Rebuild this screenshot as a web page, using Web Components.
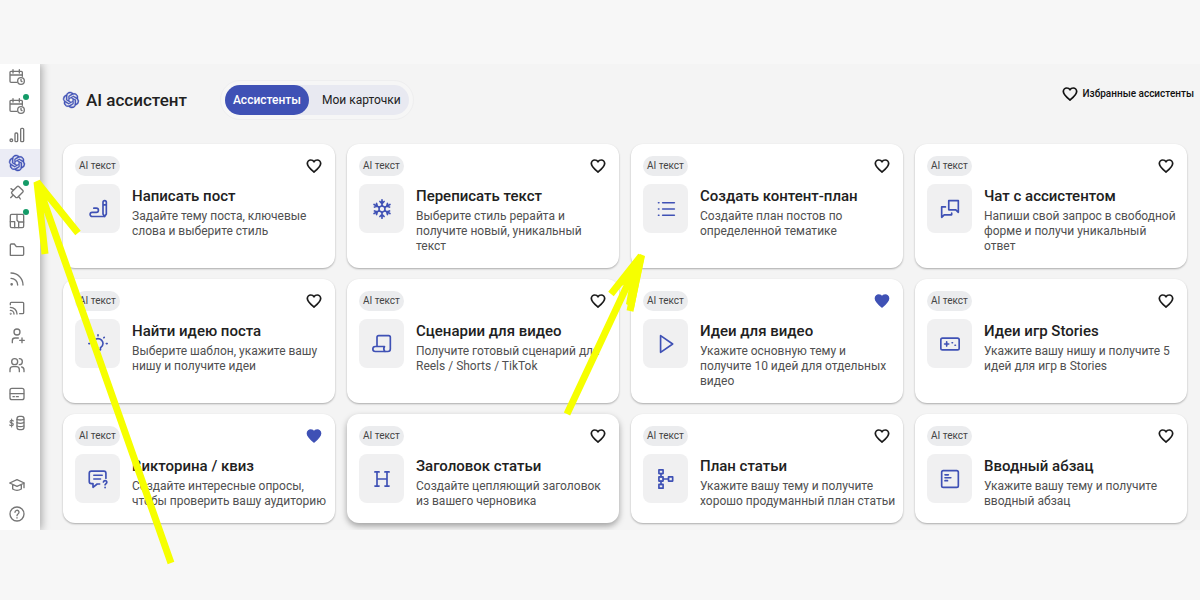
<!DOCTYPE html>
<html lang="ru">
<head>
<meta charset="utf-8">
<title>AI ассистент</title>
<style>
  body { margin: 0; background: #f7f7f7; font-family: Roboto, "Noto Sans", sans-serif; color: #212121; }
</style>
</head>
<body>
<assistant-app></assistant-app>
<script>
const AI = '<path fill="currentColor" stroke="currentColor" stroke-width=".7" d="M22.2819 9.8211a5.9847 5.9847 0 0 0-.5157-4.9108 6.0462 6.0462 0 0 0-6.5098-2.9A6.0651 6.0651 0 0 0 4.9807 4.1818a5.9847 5.9847 0 0 0-3.9977 2.9 6.0462 6.0462 0 0 0 .7427 7.0966 5.98 5.98 0 0 0 .511 4.9107 6.051 6.051 0 0 0 6.5146 2.9001A5.9847 5.9847 0 0 0 13.2599 24a6.0557 6.0557 0 0 0 5.7718-4.2058 5.9894 5.9894 0 0 0 3.9977-2.9001 6.0557 6.0557 0 0 0-.7475-7.0729zm-9.022 12.6081a4.4755 4.4755 0 0 1-2.8764-1.0408l.1419-.0804 4.7783-2.7582a.7948.7948 0 0 0 .3927-.6813v-6.7369l2.02 1.1686a.071.071 0 0 1 .038.052v5.5826a4.504 4.504 0 0 1-4.4945 4.4944zm-9.6607-4.1254a4.4708 4.4708 0 0 1-.5346-3.0137l.142.0852 4.783 2.7582a.7712.7712 0 0 0 .7806 0l5.8428-3.3685v2.3324a.0804.0804 0 0 1-.0332.0615L9.74 19.9502a4.4992 4.4992 0 0 1-6.1408-1.6464zM2.3408 7.8956a4.485 4.485 0 0 1 2.3655-1.9728V11.6a.7664.7664 0 0 0 .3879.6765l5.8144 3.3543-2.0201 1.1685a.0757.0757 0 0 1-.071 0l-4.8303-2.7865A4.504 4.504 0 0 1 2.3408 7.872zm16.5963 3.8558L13.1038 8.364 15.1192 7.2a.0757.0757 0 0 1 .071 0l4.8303 2.7913a4.4944 4.4944 0 0 1-.6765 8.1042v-5.6772a.79.79 0 0 0-.407-.667zm2.0107-3.0231l-.142-.0852-4.7735-2.7818a.7759.7759 0 0 0-.7854 0L9.409 9.2297V6.8974a.0662.0662 0 0 1 .0284-.0615l4.8303-2.7866a4.4992 4.4992 0 0 1 6.6802 4.66zM8.3065 12.863l-2.02-1.1638a.0804.0804 0 0 1-.038-.0567V6.0742a4.4992 4.4992 0 0 1 7.3757-3.4537l-.142.0805L8.704 5.459a.7948.7948 0 0 0-.3927.6813zm1.0976-2.3654l2.602-1.4998 2.6069 1.4998v2.9994l-2.5974 1.4997-2.6067-1.4997Z"/>';
const HEART = 'M12 21C7.5 17.2 2 12.8 2 8.2A5.2 5.2 0 0 1 7.2 3C9.2 3 11 4 12 5.7C13 4 14.8 3 16.8 3A5.2 5.2 0 0 1 22 8.2C22 12.8 16.5 17.2 12 21Z';
const FLAKE_ARM = '<path d="M12 8 15.5 10M12 8V1M9.500 3 12 5.500 14.500 3"/>';

/* Every glyph is drawn on a 24-unit grid. */
const ICONS = {
  ai: AI,
  heart: `<path stroke-width="2.6" d="${HEART}"/>`,
  'heart-full': `<path fill="currentColor" d="${HEART}"/>`,
  calendar: '<path d="M12 20H3a1.5 1.5 0 0 1-1.5-1.5V5A1.5 1.5 0 0 1 3 3.5h15.5A1.5 1.5 0 0 1 20 5v6M1.5 9H20M6 1v5M15.5 1v5"/><circle cx="18" cy="18" r="5"/><path d="M18 15.5V18l1.5 1"/>',
  chart: '<circle cx="3.5" cy="20" r="2"/><rect x="9" y="9" width="4" height="13" rx="1.5"/><rect x="17.5" y="2" width="4.5" height="20" rx="1.5"/>',
  plug: '<path d="M4.5 11.5 12 4q1.5-1.5 3 0l5.5 5.5q1.5 1.5 0 3L13 20q-1.5 1-3 0l-5.5-5.5q-1.5-1.5 0-3ZM6 17l-3.5 3.5M6.5 9.5 3 7M14.5 18.5l2.5 4"/>',
  layout: '<rect x="2" y="2" width="20" height="20" rx="2"/><path d="M12 2v9l2.5 2.5V22M14.5 13.5H22M8.5 22V13L2 13"/>',
  folder: '<path d="M2 20V4.5Q2 3 3.5 3H8l3 4h9.5Q22 7 22 8.5v10Q22 20 20.5 20Z"/>',
  rss: '<circle cx="4" cy="20" r="1"/><path d="M3 11a10 10 0 0 1 10 10M3 3a18 18 0 0 1 18 18"/>',
  cast: '<path d="M2 7V5q0-1.5 1.5-1.5h17Q22 3.5 22 5v14q0 1.5-1.5 1.5H16M2 11a10 10 0 0 1 10 10M2 15.5a5.5 5.5 0 0 1 5.5 5.5"/><circle cx="2.5" cy="20.5" r=".5"/>',
  'user-add': '<circle cx="12" cy="6" r="4.5"/><path d="M5 22v-3q0-4 4-4h5M19.5 15v7M16 18.5h7"/>',
  users: '<circle cx="8.5" cy="7" r="4.5"/><path d="M1.5 22v-3q0-4.5 4.5-4.5h5q4.5 0 4.5 4.5v3M15.5 2.5a4.5 4.5 0 0 1 0 9M19 15q3.5 1 3.5 4.5V22"/>',
  card: '<rect x="1.5" y="3.5" width="21" height="17" rx="3"/><path d="M2 11.5h20M6 16h2M11 16h3"/>',
  coins: '<path stroke-width="1.6" d="M4 6v12M6.5 9Q5.5 8 4 8 1.5 8 1.5 10T4 12t2.5 2T4 16q-2 0-3-1"/><rect x="12" y="2" width="10.5" height="20" rx="3.5"/><path d="M12 6.5q5 2 10 0M12 11.5q5 2 10 0M12 16.5q5 2 10 0"/>',
  cap: '<path d="M1 9 12 4l11 5-11 5ZM5.5 11v7q6.5 4 13 0v-7M22.5 9.5V16"/>',
  help: '<circle cx="12" cy="12" r="10.5"/><path d="M9 9.5a3 3 0 1 1 4.5 2.5Q12 13 12 14.5M12 17.5v.5"/>',
  write: '<path d="M18 18V4a2 2 0 0 1 4 0v14l-2 3ZM18 7h4M20 21H5a2.5 2.5 0 0 1 0-5h5a2.5 2.5 0 0 0 0-5H7"/>',
  snow: [0, 60, 120, 180, 240, 300].map(a => `<g transform="rotate(${a} 12 12)">${FLAKE_ARM}</g>`).join(''),
  list: '<path d="M8 4.5h14M8 12h14M8 19.5h14M3 4.5h.5M3 12h.5M3 19.5h.5"/>',
  chat: '<path d="M10.5 2H22v14l-3-3h-8.5ZM6.5 9.5H2V22l3-3h9v-2"/>',
  idea: '<path d="M9 19v-2.5q-3-2-3-5a6 6 0 0 1 12 0q0 3-3 5V19ZM12 1v1M4.5 4l.5.5M19.5 4l-.5.5M1 11.5h1M22 11.5h1"/>',
  script: '<path d="M6 15V4q0-2 2-2h12q2 0 2 2v14q0 3-3 3H4a3 3 0 0 1 0-6H15q-2 3 .5 6"/>',
  play: '<path d="M5.5 2 20 12 5.5 22Z"/>',
  game: '<rect x="1" y="5" width="22" height="14" rx="2"/><path d="M8 9.5v5M5.5 12h5M14.5 10.5h.5M18 13.5h.5"/>',
  quiz: '<path d="M21.5 11V5q0-2.5-2.5-2.5H4Q1.5 2.5 1.5 5v10q0 2.5 2.5 2.5h2V22l5-4h3M7 7.5h10M7 12h8M18.5 15.5q.5-1.5 2-1.5 2.5 0 2 2.5L20.5 19M20.5 22v.5"/>',
  heading: '<path d="M3.5 3.5h5M6 3.5v17M3.5 20.5h5M15.5 3.5h5M18 3.5v17M15.5 20.5h5M6 12h12"/>',
  plan: '<rect x="3.5" y="1" width="5" height="4.5"/><rect x="3.5" y="9.5" width="5" height="5"/><rect x="3.5" y="18.5" width="5" height="4.5"/><rect x="15" y="9.5" width="5" height="5"/><path d="M6 5.5v4M6 14.5v4M8.5 12H15"/>',
  article: '<rect x="2" y="2" width="20" height="20" rx="2"/><path d="M6 7h4M6 10.5h7M6 14h3"/>',
};

class AppIcon extends HTMLElement {
  connectedCallback() {
    this.attachShadow({ mode: 'open' }).innerHTML = `
      <style>
        :host { display: block; flex: none; width: 16px; height: 16px; }
        svg { display: block; width: 100%; height: 100%; overflow: visible; fill: none;
              stroke: currentColor; stroke-width: 2; stroke-linejoin: round; stroke-linecap: round; }
      </style>
      <svg viewBox="0 0 24 24" aria-hidden="true">${ICONS[this.getAttribute('name')]}</svg>`;
  }
}

class NavItem extends HTMLElement {
  connectedCallback() {
    this.attachShadow({ mode: 'open' }).innerHTML = `
      <style>
        :host { display: block; color: #757575; }
        :host([active]) { color: #3f51b5; background: #ebecf5; }
        a { position: relative; display: grid; align-items: center; height: 28px; padding-left: 9px; color: inherit; }
        i { position: absolute; left: 23px; top: 2px; width: 6px; height: 6px; border-radius: 50%; background: #149b68; }
      </style>
      <a href="#" aria-label="${this.getAttribute('label')}"><app-icon name="${this.getAttribute('icon')}"></app-icon>${this.hasAttribute('dot') ? '<i></i>' : ''}</a>`;
  }
}

class SideBar extends HTMLElement {
  connectedCallback() {
    const item = ([icon, label, extra = '']) => `<nav-item icon="${icon}" label="${label}" ${extra}></nav-item>`;
    this.attachShadow({ mode: 'open' }).innerHTML = `
      <style>
        :host { display: flex; flex-direction: column; justify-content: space-between; width: 40px; flex: none;
                background: #fff; padding-bottom: 2px; box-sizing: border-box; box-shadow: 2px 0 8px rgba(0,0,0,.3); z-index: 1; }
        nav { display: flex; flex-direction: column; justify-content: space-between; }
        .top { height: 374px; margin-top: -1px; }
        .bottom { gap: 1px; }
      </style>
      <nav class="top">${[
        ['calendar', 'Планировщик'], ['calendar', 'Календарь', 'dot'], ['chart', 'Аналитика'],
        ['ai', 'AI ассистент', 'active'], ['plug', 'Интеграции', 'dot'], ['layout', 'Шаблоны', 'dot'],
        ['folder', 'Файлы'], ['rss', 'RSS'], ['cast', 'Трансляции'], ['user-add', 'Пригласить'],
        ['users', 'Команда'], ['card', 'Тарифы'], ['coins', 'Баланс']].map(item).join('')}</nav>
      <nav class="bottom">${[['cap', 'Обучение'], ['help', 'Помощь']].map(item).join('')}</nav>`;
  }
}

class TabSwitch extends HTMLElement {
  connectedCallback() {
    this.attachShadow({ mode: 'open' }).innerHTML = `
      <style>
        :host { display: block; padding: 4px; border: 1px solid #eeeeef; border-radius: 20px; background: #f6f6f6; }
        div { display: flex; border-radius: 15px; background: #e8e9f1; }
        button { height: 30px; border: 0; border-radius: 15px; background: none; padding: 0 8px 0 13px; font: 400 12px/30px Roboto, sans-serif; color: #212121; }
        button[aria-selected=true] { background: #3f51b5; color: #fff; padding: 0 8px; font-weight: 500; }
      </style>
      <div role="tablist"><button role="tab" aria-selected="true">Ассистенты</button><button role="tab" aria-selected="false">Мои карточки</button></div>`;
  }
}

class PageHeader extends HTMLElement {
  connectedCallback() {
    this.attachShadow({ mode: 'open' }).innerHTML = `
      <style>
        :host { display: flex; align-items: center; height: 72px; padding: 0 6px 8px 23px; }
        .logo { color: #3f51b5; margin-right: 7px; }
        h1 { margin: 0 33px 0 0; font: 500 17px/24px Roboto, sans-serif; }
        a { display: flex; align-items: center; gap: 5px; margin: 0 0 12px auto; color: #111; text-decoration: none; font: 500 10px/16px Roboto, sans-serif; }
      </style>
      <app-icon class="logo" name="ai"></app-icon><h1>AI ассистент</h1><tab-switch></tab-switch>
      <a href="#"><app-icon name="heart"></app-icon>Избранные ассистенты</a>`;
  }
}

class AssistantCard extends HTMLElement {
  connectedCallback() {
    const fav = this.hasAttribute('favorite');
    this.attachShadow({ mode: 'open' }).innerHTML = `
      <style>
        :host { display: block; box-sizing: border-box; padding: 12px 12px 14px; border-radius: 12px; background: #fff; box-shadow: 0 1px 2px rgba(0,0,0,.3); }
        :host([raised]) { box-shadow: 0 3px 6px rgba(0,0,0,.35); }
        .top { display: flex; justify-content: space-between; align-items: center; height: 20px; }
        .chip { border-radius: 10px; padding: 0 4px; background: #ebecee; color: #444; font-size: 10px; line-height: 20px; }
        button { padding: 0; margin-right: 1px; border: 0; background: none; color: #1b1b1b; }
        button[aria-pressed=true] { color: #3f51b5; }
        .body { display: grid; grid-template-columns: 45px 1fr; column-gap: 12px; margin-top: 8px; align-items: start; }
        .tile { display: grid; place-items: center; height: 49px; border-radius: 8px; background: #f0f0f1; color: #3f51b5; }
        .tile app-icon { width: 20px; height: 20px; }
        h2 { margin: 0 0 1px; font-size: 15px; line-height: 24px; font-weight: 500; }
        p { margin: 0; font-size: 12px; line-height: 15px; color: #505050; }
        h2, p { white-space: nowrap; }
      </style>
      <div class="top"><span class="chip">AI текст</span>
        <button aria-label="В избранное" aria-pressed="${fav}"><app-icon name="${fav ? 'heart-full' : 'heart'}"></app-icon></button></div>
      <div class="body"><span class="tile"><app-icon name="${this.getAttribute('icon')}"></app-icon></span>
        <div><h2><slot name="title"></slot></h2><p><slot></slot></p></div></div>`;
  }
}

/* Hand-drawn pointers laid over the whole screen. */
class ArrowOverlay extends HTMLElement {
  connectedCallback() {
    this.attachShadow({ mode: 'open' }).innerHTML = `
      <style>
        :host { position: absolute; left: 0; top: 0; pointer-events: none; z-index: 2; }
        svg { display: block; fill: none; stroke: #f6ff00; stroke-width: 7; stroke-linejoin: bevel; }
      </style>
      <svg width="700" height="600" viewBox="0 0 700 600" aria-hidden="true">
        <path d="M171 563 37 182M78 233 37 182 45 254"/>
        <path d="M567 414 641 256M611 294 641 256 630 311"/>
        <path fill="#f6ff00" stroke="none" d="M640 254 645 256 634 308 626 304 630 282 617 288Z"/>
      </svg>`;
  }
}

class AssistantApp extends HTMLElement {
  connectedCallback() {
    const cards = [
      ['write', 'Написать пост', 'Задайте тему поста, ключевые<br>слова и выберите стиль'],
      ['snow', 'Переписать текст', 'Выберите стиль рерайта и<br>получите новый, уникальный<br>текст'],
      ['list', 'Создать контент-план', 'Создайте план постов по<br>определенной тематике'],
      ['chat', 'Чат с ассистентом', 'Напиши свой запрос в свободной<br>форме и получи уникальный<br>ответ'],
      ['idea', 'Найти идею поста', 'Выберите шаблон, укажите вашу<br>нишу и получите идеи'],
      ['script', 'Сценарии для видео', 'Получите готовый сценарий для<br>Reels / Shorts / TikTok'],
      ['play', 'Идеи для видео', 'Укажите основную тему и<br>получите 10 идей для отдельных<br>видео', 'favorite'],
      ['game', 'Идеи игр Stories', 'Укажите вашу нишу и получите 5<br>идей для игр в Stories'],
      ['quiz', 'Викторина / квиз', 'Создайте интересные опросы,<br>чтобы проверить вашу аудиторию', 'favorite'],
      ['heading', 'Заголовок статьи', 'Создайте цепляющий заголовок<br>из вашего черновика', 'raised'],
      ['plan', 'План статьи', 'Укажите вашу тему и получите<br>хорошо продуманный план статьи'],
      ['article', 'Вводный абзац', 'Укажите вашу тему и получите<br>вводный абзац'],
    ];
    this.attachShadow({ mode: 'open' }).innerHTML = `
      <style>
        :host { display: block; position: relative; padding: 64px 0 70px; }
        .shell { display: flex; overflow: hidden; background: #f4f4f4; }
        main { flex: 1; min-width: 0; }
        .grid { display: grid; grid-template-columns: repeat(4, minmax(0, 1fr)); gap: 11px 12px; padding: 0 13px 7px 23px; }
      </style>
      <div class="shell">
        <side-bar></side-bar>
        <main>
          <page-header></page-header>
          <div class="grid">${cards.map(([icon, title, text, flag = '']) =>
            `<assistant-card icon="${icon}" ${flag}><span slot="title">${title}</span>${text}</assistant-card>`).join('')}</div>
        </main>
      </div>
      <arrow-overlay></arrow-overlay>`;
  }
}

customElements.define('app-icon', AppIcon);
customElements.define('nav-item', NavItem);
customElements.define('side-bar', SideBar);
customElements.define('tab-switch', TabSwitch);
customElements.define('page-header', PageHeader);
customElements.define('assistant-card', AssistantCard);
customElements.define('arrow-overlay', ArrowOverlay);
customElements.define('assistant-app', AssistantApp);
</script>
</body>
</html>
